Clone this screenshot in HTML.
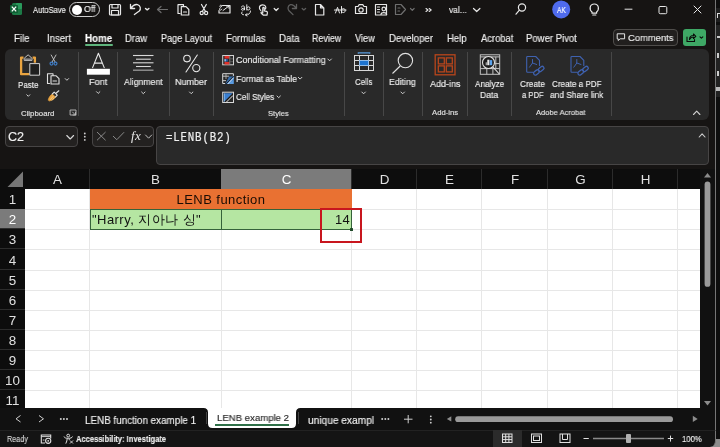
<!DOCTYPE html>
<html><head><meta charset="utf-8">
<style>
*{margin:0;padding:0;box-sizing:border-box}
html,body{width:720px;height:447px;overflow:hidden;background:#161413;font-family:"Liberation Sans",sans-serif;color:#e8e8e8}
.a{position:absolute}
.t{position:absolute;white-space:nowrap}
svg{position:absolute;left:0;top:0;overflow:visible}
#grid{left:25px;top:189px;width:675px;height:219px;background:#fff;overflow:hidden}
.hl{position:absolute;left:0;width:675px;height:1px;background:#e7e7e7}
.vl{position:absolute;top:0;width:1px;height:219px;background:#e7e7e7}
.ch{position:absolute;top:169px;height:20px;background:#0d0d0d;color:#e0e0e0;font-size:13.4px;text-align:center;line-height:20px;will-change:transform;padding-top:1px}
.rh{position:absolute;left:0;width:25px;background:#0d0d0d;color:#e0e0e0;font-size:13.4px;text-align:center;will-change:transform;padding-top:1px}
</style></head><body>

<!-- right neighbour window strip -->
<div class="a" style="left:716px;top:0;width:4px;height:447px;background:#0e0e0e"></div>
<div class="a" style="left:716px;top:8px;width:4px;height:14px;background:#1e1e1e"></div>
<div class="a" style="left:716px;top:25px;width:4px;height:72px;background:#222"></div>
<div class="a" style="left:716.5px;top:13px;width:1.2px;height:5px;background:#ddd"></div>
<div class="a" style="left:716.5px;top:13px;width:3.5px;height:1.2px;background:#ddd"></div>
<div class="a" style="left:716.5px;top:36px;width:3px;height:2px;background:#ccc"></div>
<div class="a" style="left:717px;top:53px;width:2px;height:5px;background:#ccc"></div>
<div class="a" style="left:717px;top:71px;width:2px;height:5px;background:#ccc"></div>
<div class="a" style="left:716px;top:87px;width:4px;height:4px;background:#bbb"></div>
<div class="a" style="left:704px;top:439px;width:16px;height:8px;background:#8d8d8d"></div>
<div class="a" style="left:715px;top:0;width:1px;height:440px;background:#767676"></div>

<!-- ribbon panel -->
<div class="a" style="left:5px;top:49px;width:704px;height:71px;background:#292929;border-radius:6px"></div>

<!-- formula bar -->
<div class="a" style="left:5px;top:126px;width:73px;height:21px;border:1px solid #474545;border-radius:4px;background:#232120"></div>
<div class="a" style="left:92px;top:126px;width:62px;height:21px;border:1px solid #474545;border-radius:4px;background:#232120"></div>
<div class="a" style="left:156px;top:126px;width:553px;height:39px;border:1px solid #474545;border-radius:4px;background:#292929"></div>

<!-- headers -->
<div class="a" style="left:0;top:169px;width:715px;height:20px;background:#0d0d0d"></div>
<div class="ch" style="left:25px;width:65px">A</div>
<div class="ch" style="left:90px;width:131px">B</div>
<div class="ch" style="left:221px;width:131px;background:#7b7b7b;color:#fff">C</div>
<div class="ch" style="left:352px;width:65px">D</div>
<div class="ch" style="left:417px;width:65px">E</div>
<div class="ch" style="left:482px;width:66px">F</div>
<div class="ch" style="left:548px;width:65px">G</div>
<div class="ch" style="left:613px;width:65px">H</div>
<div class="a" style="left:89px;top:169px;width:1px;height:20px;background:#2c2c2c"></div>
<div class="a" style="left:351px;top:169px;width:1px;height:20px;background:#2c2c2c"></div>
<div class="a" style="left:416px;top:169px;width:1px;height:20px;background:#2c2c2c"></div>
<div class="a" style="left:481px;top:169px;width:1px;height:20px;background:#2c2c2c"></div>
<div class="a" style="left:547px;top:169px;width:1px;height:20px;background:#2c2c2c"></div>
<div class="a" style="left:612px;top:169px;width:1px;height:20px;background:#2c2c2c"></div>
<div class="a" style="left:677px;top:169px;width:1px;height:20px;background:#2c2c2c"></div>
<svg width="720" height="447"><polygon points="7.5,187 23,187 23,171.5" fill="#777"/></svg>

<!-- GRID -->
<div id="grid" class="a">
<div class="hl" style="top:20px"></div>
<div class="hl" style="top:40px"></div>
<div class="hl" style="top:60px"></div>
<div class="hl" style="top:81px"></div>
<div class="hl" style="top:101px"></div>
<div class="hl" style="top:121px"></div>
<div class="hl" style="top:141px"></div>
<div class="hl" style="top:161px"></div>
<div class="hl" style="top:181px"></div>
<div class="hl" style="top:201px"></div>
<div class="vl" style="left:64px"></div>
<div class="vl" style="left:196px"></div>
<div class="vl" style="left:326px"></div>
<div class="vl" style="left:391px"></div>
<div class="vl" style="left:456px"></div>
<div class="vl" style="left:522px"></div>
<div class="vl" style="left:587px"></div>
<div class="vl" style="left:652px"></div>
</div>
<div class="rh" style="top:189px;height:20px;line-height:20px">1</div>
<div class="rh" style="top:209px;height:20px;line-height:20px;background:#7b7b7b;color:#fff">2</div>
<div class="rh" style="top:229px;height:20px;line-height:20px">3</div>
<div class="a" style="left:0;top:228px;width:25px;height:1px;background:#2c2c2c"></div>
<div class="rh" style="top:249px;height:21px;line-height:21px">4</div>
<div class="a" style="left:0;top:248px;width:25px;height:1px;background:#2c2c2c"></div>
<div class="rh" style="top:270px;height:20px;line-height:20px">5</div>
<div class="a" style="left:0;top:269px;width:25px;height:1px;background:#2c2c2c"></div>
<div class="rh" style="top:290px;height:20px;line-height:20px">6</div>
<div class="a" style="left:0;top:289px;width:25px;height:1px;background:#2c2c2c"></div>
<div class="rh" style="top:310px;height:20px;line-height:20px">7</div>
<div class="a" style="left:0;top:309px;width:25px;height:1px;background:#2c2c2c"></div>
<div class="rh" style="top:330px;height:20px;line-height:20px">8</div>
<div class="a" style="left:0;top:329px;width:25px;height:1px;background:#2c2c2c"></div>
<div class="rh" style="top:350px;height:20px;line-height:20px">9</div>
<div class="a" style="left:0;top:349px;width:25px;height:1px;background:#2c2c2c"></div>
<div class="rh" style="top:370px;height:20px;line-height:20px">10</div>
<div class="a" style="left:0;top:369px;width:25px;height:1px;background:#2c2c2c"></div>
<div class="rh" style="top:390px;height:18px;line-height:20px">11</div>
<div class="a" style="left:0;top:389px;width:25px;height:1px;background:#2c2c2c"></div>

<!-- cells -->
<div class="a" style="left:90px;top:189px;width:262px;height:20px;background:#e97132"></div>
<div class="t" style="left:90px;top:190px;width:262px;text-align:center;font-size:13px;letter-spacing:0.45px;line-height:20px;color:#1a0c04;will-change:transform">LENB function</div>
<div class="a" style="left:90px;top:209px;width:262px;height:21px;background:#b5e6a2;border:1px solid #35633a"></div>
<div class="a" style="left:221px;top:209px;width:1px;height:21px;background:#35633a"></div>
<div class="t" style="left:92px;top:213px;font-size:13px;letter-spacing:0.45px;line-height:14px;color:#111;will-change:transform">"Harry, 지아나 싱"</div>
<div class="t" style="left:301px;top:213px;width:49px;text-align:right;font-size:13px;letter-spacing:0.3px;line-height:14px;color:#111;will-change:transform">14</div>
<div class="a" style="left:349.5px;top:227.5px;width:3.5px;height:3.5px;background:#1f4a29;border-radius:0.5px"></div>
<div class="a" style="left:320px;top:208px;width:42px;height:35px;border:2px solid #c8161e"></div>

<!-- vertical scrollbar -->
<div class="a" style="left:700px;top:169px;width:15px;height:239px;background:#111"></div>
<svg width="720" height="447">
<polygon points="704,177.5 711,177.5 707.5,173" fill="#8c8c8c"/>
<polygon points="704,401 711,401 707.5,405.5" fill="#8c8c8c"/>
<rect x="704.6" y="181.5" width="5.8" height="105.3" rx="2.9" fill="#9a9a9a"/>
</svg>

<!-- sheet tab bar -->
<div class="a" style="left:0;top:408px;width:715px;height:22px;background:#111"></div>
<svg width="720" height="447"><path d="M203.5,408 Q208,408 208,412.5 L208,423.5 Q208,428 212.5,428 L291.5,428 Q296,428 296,423.5 L296,412.5 Q296,408 300.5,408 Z" fill="#fff"/></svg>
<div class="a" style="left:215px;top:424px;width:74px;height:1.6px;background:#2e7048"></div>
<div class="a" style="left:206px;top:412px;width:1px;height:12px;background:#444"></div>
<div class="a" style="left:298px;top:412px;width:1px;height:12px;background:#444"></div>
<svg width="720" height="447" fill="none" stroke="#cfcfcf" stroke-width="1">
<polyline points="20.5,415.5 16,418.8 20.5,422"/>
<polyline points="39,415.5 43.5,418.8 39,422"/>
<polyline points="404,419.2 412.5,419.2" /><polyline points="408.2,415 408.2,423.3"/>
</svg>
<svg width="720" height="447" fill="#d0d0d0">
<circle cx="60.8" cy="419" r="1"/><circle cx="63.9" cy="419" r="1"/><circle cx="67" cy="419" r="1"/>
<circle cx="382.2" cy="419" r="1"/><circle cx="385.3" cy="419" r="1"/><circle cx="388.4" cy="419" r="1"/>
<circle cx="430.8" cy="416.3" r="0.9"/><circle cx="430.8" cy="419.5" r="0.9"/><circle cx="430.8" cy="422.7" r="0.9"/>
<polygon points="446.8,418.9 451.3,416.3 451.3,421.5" fill="#8c8c8c"/>
<rect x="455.2" y="416.3" width="217.8" height="5.8" rx="2.9" fill="#9a9a9a"/>
<polygon points="697.7,418.9 692.8,415.7 692.8,422.1" fill="#8c8c8c"/>
</svg>

<!-- status bar -->
<div class="a" style="left:0;top:430px;width:716px;height:17px;background:#141414;border-right:1px solid #767676;border-bottom-right-radius:6px;border-top:1px solid #222"></div>
<div class="a" style="left:493px;top:430px;width:29px;height:17px;background:#2b2b2b"></div>
<svg width="720" height="447" fill="none" stroke="#e0e0e0" stroke-width="1">
<rect x="502.5" y="434" width="9.5" height="8.5"/>
<line x1="505.7" y1="434" x2="505.7" y2="442.5"/><line x1="508.9" y1="434" x2="508.9" y2="442.5"/>
<line x1="502.5" y1="436.8" x2="512" y2="436.8"/><line x1="502.5" y1="439.6" x2="512" y2="439.6"/>
<rect x="531.5" y="434" width="10" height="8.5"/><rect x="533.5" y="436" width="6" height="4.5"/>
<rect x="560" y="434" width="10" height="8.5"/><polyline points="562.5,434 562.5,439.5 567.5,439.5 567.5,434"/>
<line x1="583.5" y1="438.5" x2="588.8" y2="438.5"/>
<line x1="593" y1="438.5" x2="664" y2="438.5" stroke="#8a8a8a" stroke-width="1.5"/>
<line x1="667.8" y1="438.5" x2="673.2" y2="438.5"/><line x1="670.5" y1="435.6" x2="670.5" y2="441.6"/>
<path d="M45,443 L41.3,443 L41.3,435 L50.7,435 L50.7,438.5" stroke-width="1.1"/>
<line x1="41.3" y1="436.6" x2="50.7" y2="436.6" stroke-width="0.9"/>
<line x1="42.8" y1="440" x2="44.5" y2="440" stroke-width="0.9"/>
<circle cx="48.2" cy="440.8" r="2.6" fill="#141414" stroke-width="1.1"/>
<circle cx="48.2" cy="440.8" r="0.9" fill="#e0e0e0" stroke="none"/>
<circle cx="68.2" cy="435.6" r="1.4" stroke-width="1"/>
<path d="M64,436.5 C64.5,438 66,438.3 68.2,438.3 C70.4,438.3 72,438 72.5,436.5" stroke-width="1"/>
<path d="M67.2,438.5 L66.8,441 L65.8,443.6 M69.2,438.5 L69.2,440" stroke-width="1"/>
<path d="M70,440.5 L73,443.5 M73,440.5 L70,443.5" stroke-width="0.9"/>
</svg>
<div class="a" style="left:626.3px;top:434.2px;width:4.3px;height:8.8px;background:#b0b0b0;border-radius:1px"></div>

<!-- TITLE BAR ICONS -->
<svg width="720" height="447">
<rect x="12" y="3" width="10" height="12" rx="1.5" fill="#1c7a46"/>
<rect x="16" y="3" width="6" height="6" rx="1" fill="#2a9a5c"/>
<rect x="10" y="5" width="8" height="8" rx="1" fill="#0f5e33"/>
<path d="M11.8,6.6 L16.2,11.4 M16.2,6.6 L11.8,11.4" stroke="#fff" stroke-width="1.3"/>
</svg>
<div class="a" style="left:69px;top:2px;width:31px;height:15px;border:1.3px solid #d0d0d0;border-radius:8px"></div>
<div class="a" style="left:71.5px;top:4.6px;width:10px;height:10px;background:#fff;border-radius:50%"></div>

<svg width="720" height="447" fill="none" stroke="#e8e8e8" stroke-width="1.2" stroke-linecap="round" stroke-linejoin="round">
<rect x="109.5" y="4.5" width="11" height="10.5" rx="1"/>
<rect x="112" y="4.5" width="6" height="3.5"/>
<rect x="111.5" y="10.5" width="7" height="4.5"/>
<path d="M130.5,4.3 L130.5,8.5 L134.6,8.5 M131,8 C133,5.2 135.5,4.2 137.5,4.6 C140.5,5.5 141.2,9 139.3,11 L134.4,14.5" stroke-width="1.3"/>
<polyline points="145.5,8.5 147.2,9.9 148.9,8.5" stroke-width="1.4"/>
<path d="M157.5,9.5 L167.5,9.5 M157.5,9.5 L161,6.5 M157.5,9.5 L161,12.5" stroke="#6e6e6e"/>
<path d="M180,13.5 L178,13.5 L178,4.7 L183.5,4.7 L183.5,6.5"/>
<path d="M181.3,6.7 L186,6.7 L188.8,9.5 L188.8,15 L181.3,15 Z"/>
<line x1="183.5" y1="12" x2="186.5" y2="12"/>
<path d="M201.5,4.5 L205.5,11.5 M206.3,4.5 L202.3,11.5"/>
<circle cx="201.7" cy="13" r="1.6"/><circle cx="206.1" cy="13" r="1.6"/>
<path d="M222.5,5.5 L230,5.5 L230,13 L219,13 L219,10.5"/>
<path d="M223,10.5 L229,6 M226.5,6 L229,6 L229,8.3" stroke-width="1"/>
<path d="M220,6.8 C219,5.3 221.8,4.3 221.6,6.2 C221.4,7.5 219.3,8 219.5,9.5 C219.7,10.5 221.5,10.3 221.8,9.2" stroke-width="1"/>
<path d="M244.5,9.8 L244.5,7.3 C244.5,5.3 241.5,5.5 241.5,7 M244.3,8.2 C241,7.8 240.8,10.2 242.5,10.2 C243.5,10.2 244.3,9.5 244.5,8.8" stroke-width="1"/>
<path d="M246.8,4.8 L246.8,10 M246.8,7.8 C247.5,6.3 250,6.5 250,8.3 C250,10.3 247.5,10.5 246.8,9.2" stroke-width="1"/>
<path d="M242,12 C241,13.5 242,15 243.5,14.8 M250.5,11 C250.5,13.5 248.5,15 245.5,15 L247,13.5 M245.5,15 L247,16" stroke-width="1"/>
<path d="M260.8,10.5 C258.5,8.8 259,4.8 262.6,4.8 C265.6,4.8 266.3,7.5 265.5,9"/>
<path d="M262.8,13 L262.8,8.2 C262.8,7.2 264.3,7.2 264.3,8.2 L264.3,10.8 L266.5,11.3 C267.3,11.5 267.5,12 267.4,12.8 L267,15.2 L263.5,15.2 L261.2,13.2 C260.6,12.5 261.5,11.7 262.8,12.5"/>
<polyline points="274.2,8.5 276.2,10.5 278.2,8.5"/>
<path d="M296.5,4.3 L296.5,8.5 L292.4,8.5 M296,8 C294.2,5.3 292,4.3 290.5,4.6 C288,5.2 287.2,8.5 289,10.8 L293,14.6" stroke="#5e5e5e" stroke-width="1.3"/>
<polyline points="302.2,8.5 303.8,9.9 305.6,8.5" stroke="#5e5e5e" stroke-width="1.3"/>
<path d="M315.5,4.5 L320.5,4.5 L323.8,7.8 L323.8,15 L315.5,15 Z M320.5,4.5 L320.5,7.8 L323.8,7.8"/>
<path d="M334.5,10 L346,10"/>
<path d="M335.5,13 L337.5,7.3 L339.5,13 M341.5,6.5 L341.5,13 M341.5,9.8 C342.5,8 345.2,8.3 345.2,10.5 C345.2,13 342.5,13.2 341.5,11.5" stroke-width="1"/>
<path d="M355.5,6.5 L358,6.5 L359.2,4.7 L362.8,4.7 L364,6.5 L366.5,6.5 L366.5,13.5 L355.5,13.5 Z"/>
<circle cx="361" cy="10" r="2.2"/>
<rect x="375.5" y="4.5" width="11" height="10.5"/>
<path d="M377.5,7 L379.5,7 M377.5,9.5 L379.5,9.5 M377.5,12 L379.5,12"/>
<circle cx="383.8" cy="9" r="1.8"/><path d="M381,14.5 C381.3,12 386.3,12 386.6,14.5"/>
<path d="M395.5,4.5 L401,4.5 L405.5,9.5 L401,14.5 L395.5,14.5 Z M398,8 L400,8 M398,11 L399.5,11" stroke="#6e6e6e"/>
<polyline points="410.5,8.5 412.3,10.3 414.1,8.5" stroke="#6e6e6e"/>
<polyline points="426,8.5 428,10 426,11.5" stroke-width="1.1"/>
<polyline points="429.2,8.5 431.2,10 429.2,11.5" stroke-width="1.1"/>
<polyline points="473.5,8.5 476.7,11.5 479.9,8.5"/>
<circle cx="522" cy="7.5" r="3.6"/>
<line x1="519.4" y1="10.2" x2="516" y2="14.2"/>
<path d="M592,12 C589,9.5 589.5,4 594.3,4 C599,4 599.5,9.5 596.6,12 L596.6,13.2 L592,13.2 Z"/>
<line x1="592.8" y1="15" x2="595.8" y2="15"/>
<line x1="625" y1="9.2" x2="632" y2="9.2" stroke-width="1"/>
<rect x="659" y="6.5" width="7.8" height="7.2" rx="1.2" stroke-width="1"/>
<path d="M694,6 L701,13 M701,6 L694,13" stroke-width="1"/>
</svg>
<svg width="720" height="447">
<circle cx="561.2" cy="9.4" r="9" fill="#4f6bed"/>
</svg>

<!-- tabs underline -->
<div class="a" style="left:85px;top:44px;width:28px;height:2px;background:#5fb57d;border-radius:1px"></div>
<!-- comments -->
<div class="a" style="left:613px;top:28.7px;width:65px;height:17px;border:1px solid #4f4d4b;border-radius:4px;background:#211f1e"></div>
<svg width="720" height="447" fill="none" stroke="#e6e6e6" stroke-width="1" stroke-linejoin="round">
<path d="M617.2,33.8 L624.6,33.8 L624.6,38.8 L620.2,38.8 L618.2,40.5 L618.2,38.8 L617.2,38.8 Z"/>
</svg>
<div class="a" style="left:683.3px;top:28.7px;width:22.5px;height:17px;background:#3ea865;border-radius:3px"></div>
<svg width="720" height="447" fill="none" stroke="#0a0a0a" stroke-width="1.1" stroke-linejoin="round" stroke-linecap="round">
<path d="M687,37 L687,41.5 L694.5,41.5 L694.5,39.5"/>
<path d="M689.5,39.5 C689.5,36.5 691.5,35.5 693.5,35.5 L693.5,34 L695.8,36.3 L693.5,38.5 L693.5,37 C692,37 690.5,37.8 689.5,39.5"/>
<polyline points="700,36.8 701.4,38.2 702.8,36.8"/>
</svg>

<!-- RIBBON ICONS -->
<svg width="720" height="447">
<g fill="#474747">
<rect x="78" y="52" width="1" height="64"/>
<rect x="117" y="52" width="1" height="64"/>
<rect x="169" y="52" width="1" height="64"/>
<rect x="213" y="52" width="1" height="64"/>
<rect x="344" y="52" width="1" height="64"/>
<rect x="383" y="52" width="1" height="64"/>
<rect x="422" y="52" width="1" height="64"/>
<rect x="467" y="52" width="1" height="64"/>
<rect x="511" y="52" width="1" height="64"/>
<rect x="611" y="52" width="1" height="64"/>
</g>
</svg>
<svg width="720" height="447" fill="none" stroke-linecap="round" stroke-linejoin="round">
<!-- paste -->
<path d="M23.5,57.6 L21.1,57.6 L21.1,74.2 L29.5,74.2" stroke="#e9a440" stroke-width="2.3" stroke-linecap="butt"/>
<path d="M32.6,57.6 L34.9,57.6 L34.9,62.8" stroke="#e9a440" stroke-width="2.3" stroke-linecap="butt"/>
<path d="M24.2,60 L24.2,58.3 L28.1,54.8 L32,58.3 L32,60 Z" stroke="#c4c4c4" stroke-width="1" fill="#2a2a2a"/>
<rect x="24.6" y="58.4" width="7" height="1.7" fill="#8a8a8a"/>
<rect x="30.2" y="63.6" width="9.4" height="11.6" fill="#1f1f1f" stroke="#d0d0d0" stroke-width="1"/>
<polyline points="26.8,94.8 28.3,96.3 29.8,94.8" stroke="#d0d0d0" stroke-width="1"/>
<!-- scissors -->
<path d="M51.2,55 L55,61.8 M56,55 L52.2,61.8" stroke="#c8c8c8" stroke-width="0.9"/>
<circle cx="51.5" cy="63.6" r="1.45" stroke="#3f7cc4" stroke-width="1.2"/>
<circle cx="55.5" cy="63.6" r="1.45" stroke="#3f7cc4" stroke-width="1.2"/>
<!-- copy -->
<path d="M49.5,83.5 L47.5,83.5 L47.5,73.7 L53,73.7 L53,75.5" stroke="#e0e0e0" stroke-width="1.1"/>
<path d="M51,75.8 L56.2,75.8 L59,78.6 L59,84 L51,84 Z" stroke="#e0e0e0" stroke-width="1.1"/>
<line x1="53" y1="81" x2="56.5" y2="81" stroke="#e0e0e0" stroke-width="1"/>
<polyline points="65.2,78.6 66.9,80.3 68.6,78.6" stroke="#d0d0d0" stroke-width="1"/>
<!-- format painter -->
<path d="M48.2,99.8 C49,97 50.5,95 52.3,94 L55.5,97 C54.5,98.8 52.5,100.3 49.5,101 Z" fill="#e9a440" stroke="#e9a440" stroke-width="0.6"/>
<path d="M50.5,99.5 L53,96.5 M52,100.3 L54.3,97.8" stroke="#f7d9a0" stroke-width="0.7"/>
<path d="M52.3,94 L54.2,92.2 L57.3,95.2 L55.5,97" stroke="#e0e0e0" stroke-width="1.1"/>
<line x1="56" y1="93.2" x2="58.8" y2="90.8" stroke="#e0e0e0" stroke-width="1.2"/>
<!-- dialog launcher -->
<rect x="70.5" y="110" width="5.5" height="5" stroke="#bdbdbd" stroke-width="0.9"/>
<path d="M72.5,112 L75.5,115 M75.5,112.5 L75.5,115 L73,115" stroke="#bdbdbd" stroke-width="0.9"/>
<!-- font A -->
<path d="M92.6,67.6 L98.4,53.3 L104.2,67.6 M94.4,63.1 L102.4,63.1" stroke="#e8e8e8" stroke-width="1.1"/>
<rect x="86.9" y="68.8" width="23" height="5.9" fill="#ffffff"/>
<polyline points="96.5,91.7 98.2,93.4 99.9,91.7" stroke="#d0d0d0" stroke-width="1"/>
<!-- alignment -->
<g stroke="#d8d8d8" stroke-width="1.1" stroke-linecap="butt">
<line x1="133" y1="55.5" x2="153.5" y2="55.5"/>
<line x1="136" y1="59.2" x2="150.8" y2="59.2"/>
<line x1="133" y1="62.8" x2="153.5" y2="62.8"/>
<line x1="136" y1="66.5" x2="150.8" y2="66.5"/>
<line x1="133" y1="70.2" x2="153.5" y2="70.2" stroke="#9a9a9a" stroke-width="1.3"/>
</g>
<polyline points="141.6,92 143.3,93.7 145,92" stroke="#d0d0d0" stroke-width="1"/>
<!-- number % -->
<circle cx="187" cy="58.6" r="3.3" stroke="#e8e8e8" stroke-width="1.1"/>
<circle cx="196.3" cy="68.1" r="3.6" stroke="#e8e8e8" stroke-width="1.1"/>
<line x1="197.3" y1="55" x2="186" y2="72" stroke="#e8e8e8" stroke-width="1.1"/>
<polyline points="189.5,92 191.2,93.7 192.9,92" stroke="#d0d0d0" stroke-width="1"/>
</svg>

<!-- styles group icons -->
<svg width="720" height="447" fill="none" stroke-linecap="butt">
<!-- conditional formatting -->
<rect x="222.7" y="55.5" width="10.8" height="9.3" stroke="#d0d0d0" stroke-width="1"/>
<rect x="224.5" y="56" width="5" height="2.6" fill="#e0302a"/>
<rect x="224.5" y="61.9" width="5" height="2.6" fill="#e0302a"/>
<rect x="224.3" y="59.1" width="1.8" height="2.4" fill="#7fb2ea"/>
<rect x="226.1" y="59.1" width="1.6" height="2.4" fill="#2c64b8"/>
<line x1="229.8" y1="56" x2="229.8" y2="64.5" stroke="#8a8a8a" stroke-width="0.8"/>
<line x1="229.8" y1="58.8" x2="233" y2="58.8" stroke="#666" stroke-width="0.8"/>
<line x1="229.8" y1="61.7" x2="233" y2="61.7" stroke="#666" stroke-width="0.8"/>
<!-- format as table -->
<path d="M233.4,76 L233.4,73.7 L222.7,73.7 L222.7,83.5 L225,83.5" stroke="#d8d8d8" stroke-width="1"/>
<line x1="222.7" y1="76.2" x2="229" y2="76.2" stroke="#d0d0d0" stroke-width="0.9"/>
<line x1="222.7" y1="80.6" x2="226" y2="80.6" stroke="#d0d0d0" stroke-width="0.9"/>
<line x1="226" y1="73.7" x2="226" y2="79" stroke="#bdbdbd" stroke-width="0.8"/>
<path d="M225.5,84 L233.8,84 L233.8,75.5 Z" fill="#5a9be0"/>
<path d="M229,76.5 L233.8,76.5 L233.8,80 L227,84 L225.5,84 Z" fill="#3b7fd0" opacity="0.8"/>
<line x1="226.2" y1="83.8" x2="233.5" y2="76.2" stroke="#1a1a1a" stroke-width="1"/>
<line x1="227.8" y1="84" x2="233.6" y2="77.8" stroke="#e8e8e8" stroke-width="0.9"/>
<!-- cell styles -->
<rect x="222.7" y="92.2" width="10.8" height="10.3" stroke="#d8d8d8" stroke-width="1"/>
<path d="M223.8,93.3 L232.6,93.3 L223.8,102 Z" fill="#3b7fd0"/>
<line x1="224.3" y1="93.5" x2="224.3" y2="101.5" stroke="#8ec0f0" stroke-width="0.8"/>
<line x1="225" y1="102" x2="233" y2="94" stroke="#1a1a1a" stroke-width="0.9"/>
<line x1="226.5" y1="102" x2="233" y2="95.5" stroke="#e8e8e8" stroke-width="1"/>
</svg>
<svg width="720" height="447" fill="none" stroke="#d0d0d0" stroke-width="1" stroke-linecap="round" stroke-linejoin="round">
<polyline points="327.8,59 329.6,60.8 331.4,59"/>
<polyline points="298.3,77.3 300.1,79.1 301.9,77.3"/>
<polyline points="277,96 278.7,97.7 280.4,96"/>
<polyline points="361.8,92 363.6,93.8 365.4,92"/>
<polyline points="400.9,92 402.7,93.8 404.5,92"/>
<polyline points="693.5,114.5 696.7,111.2 699.9,114.5" stroke-width="1.1"/>
<polyline points="699.2,137 702.1,133.8 705,137" stroke-width="1.1"/>
</svg>
<!-- cells / editing / addins / analyze / pdf -->
<svg width="720" height="447" fill="none" stroke-linecap="butt">
<rect x="359.5" y="60.5" width="9" height="5" fill="#1e74d0"/>
<g stroke="#d8d8d8" stroke-width="1">
<rect x="354.5" y="55.5" width="19" height="15"/>
<line x1="359.5" y1="55.5" x2="359.5" y2="70.5"/>
<line x1="368.5" y1="55.5" x2="368.5" y2="70.5"/>
<line x1="354.5" y1="60.5" x2="373.5" y2="60.5"/>
<line x1="354.5" y1="65.5" x2="373.5" y2="65.5"/>
</g>
<rect x="359.5" y="60.5" width="9" height="5" stroke="#7fb6ee" stroke-width="0.8"/>
<path d="M358.3,53.8 L358.3,52.8 L369.7,52.8 L369.7,53.8" stroke="#5a9de0" stroke-width="1.2"/>
<!-- editing -->
<circle cx="405.4" cy="60.6" r="7.2" stroke="#e0e0e0" stroke-width="1.1"/>
<line x1="400.2" y1="66" x2="392.5" y2="73.5" stroke="#e0e0e0" stroke-width="1.1"/>
<!-- add-ins -->
<g stroke="#b8461c" stroke-width="1.3">
<rect x="435.2" y="54.8" width="19.8" height="20"/>
<rect x="438.3" y="57.9" width="6" height="6"/>
<rect x="446.3" y="57.9" width="6" height="6"/>
<rect x="438.3" y="65.9" width="6" height="6"/>
<rect x="446.3" y="65.9" width="6" height="6"/>
</g>
<!-- analyze data -->
<g stroke="#c4c4c4" stroke-width="1">
<rect x="480.3" y="54.8" width="19.4" height="19.5"/>
<line x1="480.3" y1="56.9" x2="499.7" y2="56.9"/>
<line x1="480.3" y1="68.6" x2="499.7" y2="68.6"/>
<line x1="493" y1="63.6" x2="499.7" y2="63.6"/>
<line x1="486.8" y1="68.6" x2="486.8" y2="74.3"/>
<line x1="492.9" y1="68.6" x2="492.9" y2="74.3"/>
<line x1="495.8" y1="56.9" x2="495.8" y2="68.6"/>
</g>
<circle cx="488.5" cy="62.5" r="6" fill="#1c1c1c" stroke="#e0e0e0" stroke-width="1.1"/>
<line x1="492.8" y1="66.8" x2="499.3" y2="74" stroke="#e0e0e0" stroke-width="1.1"/>
<rect x="485.6" y="62.3" width="1.6" height="2.9" fill="#9a9a9a"/>
<rect x="487.3" y="59.7" width="2.1" height="5.5" fill="#e8e8e8"/>
<rect x="489.8" y="60.1" width="2.4" height="5.1" fill="#5aa2ec"/>
<!-- pdf 1 -->
<g stroke="#3f62b0" stroke-width="1.1" stroke-linejoin="round" stroke-linecap="round">
<path d="M533,72.3 L527.5,72.3 Q526.7,72.3 526.7,71.5 L526.7,57.3 Q526.7,56.5 527.5,56.5 L535.7,56.5 L539.5,60.3 L539.5,65.5"/>
<path d="M532.5,59.5 L532.5,63 L529.5,67.2 M532.5,63 L536.7,64.5" stroke-width="1"/>
<rect x="533.3" y="70.6" width="6.4" height="3.6" rx="1.8" transform="rotate(-38 536.5 72.4)" stroke-width="1.3"/>
<rect x="537.9" y="67.2" width="6.4" height="3.6" rx="1.8" transform="rotate(-38 541.1 69)" stroke-width="1.3"/>
</g>
<g transform="translate(44.3,0)" stroke="#3f62b0" stroke-width="1.1" stroke-linejoin="round" stroke-linecap="round">
<path d="M533,72.3 L527.5,72.3 Q526.7,72.3 526.7,71.5 L526.7,57.3 Q526.7,56.5 527.5,56.5 L535.7,56.5 L539.5,60.3 L539.5,65.5"/>
<path d="M532.5,59.5 L532.5,63 L529.5,67.2 M532.5,63 L536.7,64.5" stroke-width="1"/>
<rect x="533.3" y="70.6" width="6.4" height="3.6" rx="1.8" transform="rotate(-38 536.5 72.4)" stroke-width="1.3"/>
<rect x="537.9" y="67.2" width="6.4" height="3.6" rx="1.8" transform="rotate(-38 541.1 69)" stroke-width="1.3"/>
</g>
</svg>

<!-- formula bar icons -->
<svg width="720" height="447" fill="none" stroke-linecap="round" stroke-linejoin="round">
<polyline points="66.8,135.5 70.2,139 73.6,135.5" stroke="#d8d8d8" stroke-width="1.1"/>
<g fill="#d0d0d0"><circle cx="84.8" cy="133.5" r="0.9"/><circle cx="84.8" cy="136.7" r="0.9"/><circle cx="84.8" cy="139.9" r="0.9"/></g>
<path d="M97.3,132.3 L105.3,140 M105.3,132.3 L97.3,140" stroke="#8a8a8a" stroke-width="1"/>
<polyline points="113.3,136.3 116.8,139.7 123.8,132.5" stroke="#8a8a8a" stroke-width="1"/>
<polyline points="145.5,135 148.6,138.2 151.7,135" stroke="#bdbdbd" stroke-width="1"/>
</svg>
<div class="t" style="left:130.8px;top:128px;font-family:'Liberation Serif',serif;font-style:italic;font-size:13px;line-height:16px;color:#e8e8e8;letter-spacing:0.4px;will-change:transform">fx</div>

<div id="ftxt" class="t" style="left:165.6px;top:128px;font-family:'Liberation Mono',monospace;font-size:13.5px;line-height:20px;letter-spacing:1.0px;color:#f0f0f0;transform:scaleX(0.8);transform-origin:0 0;-webkit-text-stroke:0.2px #f0f0f0">=LENB(B2)</div>
<div class="t" style="left:33.00px;top:-10px;font-size:9.2px;line-height:40px;transform:scaleX(0.8205);transform-origin:0 0;color:#f0f0f0;font-weight:normal;font-family:'Liberation Sans';-webkit-text-stroke:0.15px #f0f0f0;will-change:transform">AutoSave</div>
<div class="t" style="left:84.05px;top:-11px;font-size:9.2px;line-height:40px;transform:scaleX(0.9455);transform-origin:0 0;color:#f0f0f0;font-weight:normal;font-family:'Liberation Sans';-webkit-text-stroke:0.15px #f0f0f0;will-change:transform">Off</div>
<div class="t" style="left:449.00px;top:-10px;font-size:9.2px;line-height:40px;transform:scaleX(0.9158);transform-origin:0 0;color:#f0f0f0;font-weight:normal;font-family:'Liberation Sans';-webkit-text-stroke:0.15px #f0f0f0;will-change:transform">val...</div>
<div class="t" style="left:556.80px;top:-10px;font-size:8.4px;line-height:40px;transform:scaleX(0.8000);transform-origin:0 0;color:#ffffff;font-weight:normal;font-family:'Liberation Sans';-webkit-text-stroke:0.15px #ffffff;will-change:transform">AK</div>
<div class="t" style="left:13.85px;top:19px;font-size:10.1px;line-height:40px;transform:scaleX(0.9467);transform-origin:0 0;color:#f0f0f0;font-weight:normal;font-family:'Liberation Sans';-webkit-text-stroke:0.15px #f0f0f0;will-change:transform">File</div>
<div class="t" style="left:47.05px;top:19px;font-size:10.1px;line-height:40px;transform:scaleX(0.9479);transform-origin:0 0;color:#f0f0f0;font-weight:normal;font-family:'Liberation Sans';-webkit-text-stroke:0.15px #f0f0f0;will-change:transform">Insert</div>
<div class="t" style="left:84.83px;top:19px;font-size:10.1px;line-height:40px;transform:scaleX(0.9667);transform-origin:0 0;color:#ffffff;font-weight:bold;font-family:'Liberation Sans';-webkit-text-stroke:0.15px #ffffff;will-change:transform">Home</div>
<div class="t" style="left:124.57px;top:19px;font-size:10.1px;line-height:40px;transform:scaleX(0.9348);transform-origin:0 0;color:#f0f0f0;font-weight:normal;font-family:'Liberation Sans';-webkit-text-stroke:0.15px #f0f0f0;will-change:transform">Draw</div>
<div class="t" style="left:160.80px;top:19px;font-size:10.1px;line-height:40px;transform:scaleX(0.9000);transform-origin:0 0;color:#f0f0f0;font-weight:normal;font-family:'Liberation Sans';-webkit-text-stroke:0.15px #f0f0f0;will-change:transform">Page Layout</div>
<div class="t" style="left:226.06px;top:19px;font-size:10.1px;line-height:40px;transform:scaleX(0.9390);transform-origin:0 0;color:#f0f0f0;font-weight:normal;font-family:'Liberation Sans';-webkit-text-stroke:0.15px #f0f0f0;will-change:transform">Formulas</div>
<div class="t" style="left:278.54px;top:19px;font-size:10.1px;line-height:40px;transform:scaleX(0.9625);transform-origin:0 0;color:#f0f0f0;font-weight:normal;font-family:'Liberation Sans';-webkit-text-stroke:0.15px #f0f0f0;will-change:transform">Data</div>
<div class="t" style="left:311.62px;top:19px;font-size:10.1px;line-height:40px;transform:scaleX(0.8828);transform-origin:0 0;color:#f0f0f0;font-weight:normal;font-family:'Liberation Sans';-webkit-text-stroke:0.15px #f0f0f0;will-change:transform">Review</div>
<div class="t" style="left:355.00px;top:19px;font-size:10.1px;line-height:40px;transform:scaleX(0.9091);transform-origin:0 0;color:#f0f0f0;font-weight:normal;font-family:'Liberation Sans';-webkit-text-stroke:0.15px #f0f0f0;will-change:transform">View</div>
<div class="t" style="left:388.54px;top:19px;font-size:10.1px;line-height:40px;transform:scaleX(0.9556);transform-origin:0 0;color:#f0f0f0;font-weight:normal;font-family:'Liberation Sans';-webkit-text-stroke:0.15px #f0f0f0;will-change:transform">Developer</div>
<div class="t" style="left:446.56px;top:19px;font-size:10.1px;line-height:40px;transform:scaleX(0.9375);transform-origin:0 0;color:#f0f0f0;font-weight:normal;font-family:'Liberation Sans';-webkit-text-stroke:0.15px #f0f0f0;will-change:transform">Help</div>
<div class="t" style="left:480.50px;top:19px;font-size:10.1px;line-height:40px;transform:scaleX(0.9286);transform-origin:0 0;color:#f0f0f0;font-weight:normal;font-family:'Liberation Sans';-webkit-text-stroke:0.15px #f0f0f0;will-change:transform">Acrobat</div>
<div class="t" style="left:526.06px;top:19px;font-size:10.1px;line-height:40px;transform:scaleX(0.9434);transform-origin:0 0;color:#f0f0f0;font-weight:normal;font-family:'Liberation Sans';-webkit-text-stroke:0.15px #f0f0f0;will-change:transform">Power Pivot</div>
<div class="t" style="left:627.73px;top:18px;font-size:9.7px;line-height:40px;transform:scaleX(0.9696);transform-origin:0 0;color:#f0f0f0;font-weight:normal;font-family:'Liberation Sans';-webkit-text-stroke:0.15px #f0f0f0;will-change:transform">Comments</div>
<div class="t" style="left:17.92px;top:65px;font-size:9.6px;line-height:40px;transform:scaleX(0.8326);transform-origin:0 0;color:#f0f0f0;font-weight:normal;font-family:'Liberation Sans';-webkit-text-stroke:0.15px #f0f0f0;will-change:transform">Paste</div>
<div class="t" style="left:88.84px;top:62px;font-size:9.6px;line-height:40px;transform:scaleX(0.9556);transform-origin:0 0;color:#f0f0f0;font-weight:normal;font-family:'Liberation Sans';-webkit-text-stroke:0.15px #f0f0f0;will-change:transform">Font</div>
<div class="t" style="left:124.00px;top:62px;font-size:9.6px;line-height:40px;transform:scaleX(0.9070);transform-origin:0 0;color:#f0f0f0;font-weight:normal;font-family:'Liberation Sans';-webkit-text-stroke:0.15px #f0f0f0;will-change:transform">Alignment</div>
<div class="t" style="left:174.86px;top:62px;font-size:9.6px;line-height:40px;transform:scaleX(0.9364);transform-origin:0 0;color:#f0f0f0;font-weight:normal;font-family:'Liberation Sans';-webkit-text-stroke:0.15px #f0f0f0;will-change:transform">Number</div>
<div class="t" style="left:235.51px;top:40px;font-size:9px;line-height:40px;transform:scaleX(0.9921);transform-origin:0 0;color:#f0f0f0;font-weight:normal;font-family:'Liberation Sans';-webkit-text-stroke:0.15px #f0f0f0;will-change:transform">Conditional Formatting</div>
<div class="t" style="left:235.55px;top:59px;font-size:9px;line-height:40px;transform:scaleX(0.9484);transform-origin:0 0;color:#f0f0f0;font-weight:normal;font-family:'Liberation Sans';-webkit-text-stroke:0.15px #f0f0f0;will-change:transform">Format as Table</div>
<div class="t" style="left:235.60px;top:77px;font-size:9px;line-height:40px;transform:scaleX(0.8976);transform-origin:0 0;color:#f0f0f0;font-weight:normal;font-family:'Liberation Sans';-webkit-text-stroke:0.15px #f0f0f0;will-change:transform">Cell Styles</div>
<div class="t" style="left:354.78px;top:62px;font-size:9.6px;line-height:40px;transform:scaleX(0.8200);transform-origin:0 0;color:#f0f0f0;font-weight:normal;font-family:'Liberation Sans';-webkit-text-stroke:0.15px #f0f0f0;will-change:transform">Cells</div>
<div class="t" style="left:388.79px;top:62px;font-size:9.6px;line-height:40px;transform:scaleX(0.9107);transform-origin:0 0;color:#f0f0f0;font-weight:normal;font-family:'Liberation Sans';-webkit-text-stroke:0.15px #f0f0f0;will-change:transform">Editing</div>
<div class="t" style="left:430.00px;top:64px;font-size:9.6px;line-height:40px;transform:scaleX(0.9375);transform-origin:0 0;color:#f0f0f0;font-weight:normal;font-family:'Liberation Sans';-webkit-text-stroke:0.15px #f0f0f0;will-change:transform">Add-ins</div>
<div class="t" style="left:474.90px;top:64px;font-size:9.6px;line-height:40px;transform:scaleX(0.8559);transform-origin:0 0;color:#f0f0f0;font-weight:normal;font-family:'Liberation Sans';-webkit-text-stroke:0.15px #f0f0f0;will-change:transform">Analyze</div>
<div class="t" style="left:480.11px;top:75px;font-size:9.6px;line-height:40px;transform:scaleX(0.8947);transform-origin:0 0;color:#f0f0f0;font-weight:normal;font-family:'Liberation Sans';-webkit-text-stroke:0.15px #f0f0f0;will-change:transform">Data</div>
<div class="t" style="left:519.73px;top:64px;font-size:9.6px;line-height:40px;transform:scaleX(0.8667);transform-origin:0 0;color:#f0f0f0;font-weight:normal;font-family:'Liberation Sans';-webkit-text-stroke:0.15px #f0f0f0;will-change:transform">Create</div>
<div class="t" style="left:521.70px;top:75px;font-size:9.6px;line-height:40px;transform:scaleX(0.7963);transform-origin:0 0;color:#f0f0f0;font-weight:normal;font-family:'Liberation Sans';-webkit-text-stroke:0.15px #f0f0f0;will-change:transform">a PDF</div>
<div class="t" style="left:551.75px;top:64px;font-size:9.6px;line-height:40px;transform:scaleX(0.8456);transform-origin:0 0;color:#f0f0f0;font-weight:normal;font-family:'Liberation Sans';-webkit-text-stroke:0.15px #f0f0f0;will-change:transform">Create a PDF</div>
<div class="t" style="left:550.40px;top:75px;font-size:9.6px;line-height:40px;transform:scaleX(0.8689);transform-origin:0 0;color:#f0f0f0;font-weight:normal;font-family:'Liberation Sans';-webkit-text-stroke:0.15px #f0f0f0;will-change:transform">and Share link</div>
<div class="t" style="left:21.00px;top:94px;font-size:7.6px;line-height:40px;transform:scaleX(1.0281);transform-origin:0 0;color:#e0e0e0;font-weight:normal;font-family:'Liberation Sans';-webkit-text-stroke:0.15px #e0e0e0;will-change:transform">Clipboard</div>
<div class="t" style="left:268.31px;top:94px;font-size:7.6px;line-height:40px;transform:scaleX(0.9947);transform-origin:0 0;color:#e0e0e0;font-weight:normal;font-family:'Liberation Sans';-webkit-text-stroke:0.15px #e0e0e0;will-change:transform">Styles</div>
<div class="t" style="left:431.80px;top:93px;font-size:7.6px;line-height:40px;transform:scaleX(1.0120);transform-origin:0 0;color:#e0e0e0;font-weight:normal;font-family:'Liberation Sans';-webkit-text-stroke:0.15px #e0e0e0;will-change:transform">Add-ins</div>
<div class="t" style="left:536.30px;top:93px;font-size:7.6px;line-height:40px;transform:scaleX(0.9920);transform-origin:0 0;color:#e0e0e0;font-weight:normal;font-family:'Liberation Sans';-webkit-text-stroke:0.15px #e0e0e0;will-change:transform">Adobe Acrobat</div>
<div class="t" style="left:7.58px;top:117px;font-size:12.3px;line-height:40px;transform:scaleX(1.0214);transform-origin:0 0;color:#f0f0f0;font-weight:normal;font-family:'Liberation Sans';-webkit-text-stroke:0.15px #f0f0f0;will-change:transform">C2</div>
<div class="t" style="left:85.35px;top:401px;font-size:10.4px;line-height:40px;transform:scaleX(0.9474);transform-origin:0 0;color:#f0f0f0;font-weight:normal;font-family:'Liberation Sans';-webkit-text-stroke:0.15px #f0f0f0;will-change:transform">LENB function example 1</div>
<div class="t" style="left:216.53px;top:398px;font-size:9.9px;line-height:40px;transform:scaleX(0.9722);transform-origin:0 0;color:#262626;font-weight:normal;font-family:'Liberation Sans';-webkit-text-stroke:0.15px #262626;will-change:transform">LENB example 2</div>
<div class="t" style="left:307.77px;top:401px;font-size:10.4px;line-height:40px;transform:scaleX(0.9780);transform-origin:0 0;color:#f0f0f0;font-weight:normal;font-family:'Liberation Sans';-webkit-text-stroke:0.15px #f0f0f0;will-change:transform">unique exampl</div>
<div class="t" style="left:6.73px;top:419px;font-size:9.4px;line-height:40px;transform:scaleX(0.7692);transform-origin:0 0;color:#d0d0d0;font-weight:normal;font-family:'Liberation Sans';-webkit-text-stroke:0.15px #d0d0d0;will-change:transform">Ready</div>
<div class="t" style="left:76.25px;top:419px;font-size:9.4px;line-height:40px;transform:scaleX(0.8036);transform-origin:0 0;color:#f0f0f0;font-weight:bold;font-family:'Liberation Sans';-webkit-text-stroke:0.15px #f0f0f0;will-change:transform">Accessibility: Investigate</div>
<div class="t" style="left:681.80px;top:419px;font-size:8.6px;line-height:40px;transform:scaleX(0.9000);transform-origin:0 0;color:#f0f0f0;font-weight:normal;font-family:'Liberation Sans';-webkit-text-stroke:0.15px #f0f0f0;will-change:transform">100%</div>

</body></html>
